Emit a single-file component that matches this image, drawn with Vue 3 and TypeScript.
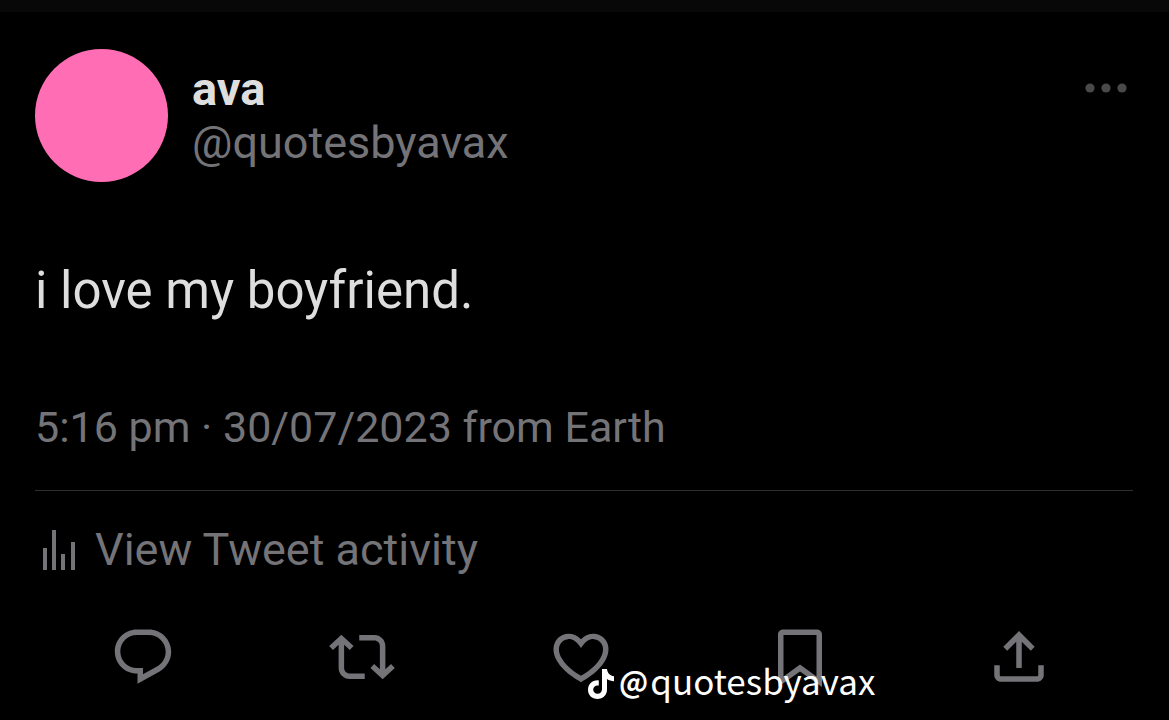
<script setup lang="ts">
interface Action {
  label: string
  path: string
}

const actions: Action[] = [
  {
    label: 'Reply',
    path: 'M1.751 10c0-4.42 3.584-8 8.005-8h4.366c4.49 0 8.129 3.64 8.129 8.13 0 2.96-1.607 5.68-4.196 7.11l-8.054 4.46v-3.69h-.067c-4.49.1-8.183-3.51-8.183-8.01zm8.005-6c-3.317 0-6.005 2.69-6.005 6 0 3.37 2.77 6.08 6.138 6.01l.351-.01h1.761v2.3l5.087-2.81c1.951-1.08 3.163-3.13 3.163-5.36 0-3.39-2.744-6.13-6.129-6.13H9.756z',
  },
  {
    label: 'Retweet',
    path: 'M4.5 3.88l4.432 4.14-1.364 1.46L5.5 7.55V16c0 1.1.896 2 2 2H13v2H7.5c-2.209 0-4-1.79-4-4V7.55L1.432 9.48.068 8.02 4.5 3.88zM16.5 6H11V4h5.5c2.209 0 4 1.79 4 4v8.45l2.068-1.93 1.364 1.46-4.432 4.14-4.432-4.14 1.364-1.46 2.068 1.93V8c0-1.1-.896-2-2-2z',
  },
  {
    label: 'Like',
    path: 'M16.697 5.5c-1.222-.06-2.679.51-3.89 2.16l-.805 1.09-.806-1.09C9.984 6.01 8.526 5.44 7.304 5.5c-1.243.07-2.349.78-2.91 1.91-.552 1.12-.633 2.78.479 4.82 1.074 1.97 3.257 4.27 7.129 6.61 3.87-2.34 6.052-4.64 7.126-6.61 1.111-2.04 1.03-3.7.477-4.82-.561-1.13-1.666-1.84-2.908-1.91zm4.187 7.69c-1.351 2.48-4.001 5.12-8.379 7.67l-.503.3-.504-.3c-4.379-2.55-7.029-5.19-8.382-7.67-1.36-2.5-1.41-4.86-.514-6.67.887-1.79 2.647-2.91 4.601-3.01 1.651-.09 3.368.56 4.798 2.01 1.429-1.45 3.146-2.1 4.796-2.01 1.954.1 3.714 1.22 4.601 3.01.896 1.81.846 4.17-.514 6.67z',
  },
  {
    label: 'Bookmark',
    path: 'M4 3.8C4 2.8 4.8 2 5.8 2h12.4c1 0 1.8.8 1.8 1.8v19.14l-8-5.71-8 5.71V3.8zM6 4v15.06l6-4.29 6 4.29V4H6z',
  },
  {
    label: 'Share',
    path: 'M12 2.59l5.7 5.7-1.41 1.42L13 6.41V16h-2V6.41l-3.3 3.3-1.41-1.42L12 2.59zM21 15v3.51c0 1.38-1.12 2.49-2.5 2.49h-13C4.11 21 3 19.88 3 18.5V15h2v3.5c0 .28.22.5.5.5h13c.28 0 .5-.22.5-.5V15h2z',
  },
]
</script>

<template>
  <main class="page">
    <article class="tweet">
      <header class="author">
        <div class="avatar"></div>
        <div class="names">
          <strong class="name">ava</strong>
          <a class="handle" href="#">@quotesbyavax</a>
        </div>
        <button class="more" type="button" aria-label="More">
          <svg viewBox="0 0 44 12" width="44" height="12" aria-hidden="true">
            <circle cx="6" cy="6" r="4.600" />
            <circle cx="22" cy="6" r="4.600" />
            <circle cx="38" cy="6" r="4.600" />
          </svg>
        </button>
      </header>
      <p class="body">i love my boyfriend.</p>
      <p class="meta">5:16 pm · 30/07/2023 from Earth</p>
      <a class="activity" href="#">
        <svg viewBox="0 0 34 42" width="34" height="42" aria-hidden="true">
          <path d="M1 19h4v22H1zM10 1h4v40h-4zM19 25h4v16h-4zM29 13h4v28h-4z" />
        </svg>
        <span>View Tweet activity</span>
      </a>
      <div class="actions">
        <button v-for="a in actions" :key="a.label" type="button" :aria-label="a.label">
          <svg viewBox="0 0 24 24" width="66" height="66" aria-hidden="true">
            <path fill-rule="evenodd" :d="a.path" />
          </svg>
        </button>
      </div>
      <div class="watermark">
        <svg class="note" viewBox="0 0 26 30" width="26" height="30" aria-hidden="true">
          <path d="M14 0h5c.4 4 3 6.800 7 7.200v5c-2.700 0-5-.8-7-2.200v10.500C19 26 15 30 9.500 30S0 26 0 20.700c0-5.600 4.700-10 10.800-9.300v5.200c-3-.8-5.600 1.200-5.600 4 0 2.400 1.900 4.200 4.300 4.200 2.700 0 4.500-1.800 4.500-4.800z" />
        </svg>
        <span class="at">@</span>
        <span>quotesbyavax</span>
      </div>
    </article>
  </main>
</template>

<style>
body {
  margin: 0;
  background: #000;
}
</style>

<style scoped>
.page {
  min-height: 100vh;
  box-sizing: border-box;
  border-top: 12px solid #080808;
  background: #000;
  color: #747478;
  font-family: Roboto, "Liberation Sans", sans-serif;
}
.tweet {
  position: relative;
  padding: 37px 36px 0 35px;
}
.author {
  display: flex;
  align-items: flex-start;
}
.avatar {
  width: 133px;
  height: 133px;
  border-radius: 50%;
  background: #ff6eb4;
}
.names {
  display: flex;
  flex: 1;
  flex-direction: column;
  margin: 13px 0 0 24px;
}
.name,
.handle {
  font-size: 45px;
  line-height: 54px;
}
.name {
  color: #dedede;
  font-size: 47px;
}
a {
  color: inherit;
  text-decoration: none;
}
button {
  padding: 0;
  border: 0;
  background: none;
  color: inherit;
  cursor: pointer;
}
svg {
  display: block;
  flex: none;
  fill: currentColor;
}
.more {
  margin: 33px 5px 0 0;
  color: #49494c;
}
.body {
  margin: 76px 0 0;
  color: #dedede;
  font-size: 51px;
  line-height: 66px;
}
.meta {
  margin: 76px 0 0;
  padding-bottom: 36px;
  border-bottom: 1px solid #303032;
  font-size: 43px;
  line-height: 54px;
}
.activity {
  display: flex;
  align-items: center;
  gap: 19px;
  margin-top: 32px;
  padding-left: 7px;
  font-size: 45px;
  line-height: 54px;
}
.actions {
  display: grid;
  grid-template-columns: repeat(5, 1fr);
  margin: 47px 4px 0 -2px;
}
.actions button {
  display: flex;
  justify-content: center;
}
.watermark {
  position: absolute;
  top: 644px;
  left: 588px;
  display: flex;
  align-items: center;
  color: #fff;
  font-family: "Noto Sans CJK SC", sans-serif;
  font-size: 35px;
  line-height: 48px;
}
.note {
  margin-top: 8px;
}
.at {
  margin: 0 2px 0 5px;
  font-size: 29px;
  font-weight: 700;
}
</style>
